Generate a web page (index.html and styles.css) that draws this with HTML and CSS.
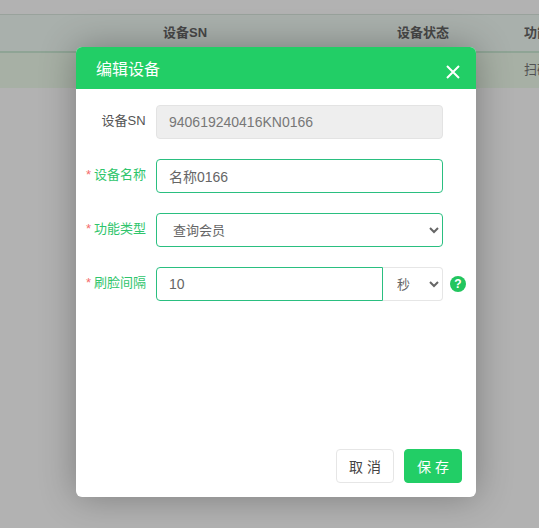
FILE: index.html
```html
<!doctype html>
<html lang="zh-CN">
<head>
  <meta charset="utf-8">
  <title>编辑设备</title>
  <link rel="stylesheet" href="styles.css">
</head>
<body>
  <div class="page">
    <div class="top_strip"></div>
    <div class="tableHead">
      <div class="col_sn">设备SN</div>
      <div class="col_status">设备状态</div>
      <div class="col_type">功能类型</div>
    </div>
    <div class="tableRow">
      <div class="col_sn"></div>
      <div class="col_status"></div>
      <div class="col_type">扫码验证</div>
    </div>
  </div>
  <div class="backdrop"></div>
  <div class="modal">
    <div class="modalHeader">
      <span class="modalTitle">编辑设备</span>
      <svg class="modalClose" width="14" height="14" viewBox="0 0 14 14">
        <path d="M1 1L13 13M13 1L1 13" stroke="#fff" stroke-width="2" fill="none"/>
      </svg>
    </div>
    <div class="modalBody">
      <div class="formRow">
        <label class="formLabel plain">设备SN</label>
        <input class="formInput disabled" value="940619240416KN0166" disabled>
      </div>
      <div class="formRow">
        <label class="formLabel"><i>*</i>设备名称</label>
        <input class="formInput" value="名称0166">
      </div>
      <div class="formRow">
        <label class="formLabel"><i>*</i>功能类型</label>
        <select class="formInput formSelect">
          <option>查询会员</option>
        </select>
      </div>
      <div class="formRow">
        <label class="formLabel"><i>*</i>刷脸间隔</label>
        <div class="inputGroup">
          <input class="formInput groupInput" value="10">
          <select class="formInput unitSelect">
            <option>秒</option>
          </select>
        </div>
        <span class="helpIcon">?</span>
      </div>
    </div>
    <div class="modalFooter">
      <button class="btn btnCancel">取 消</button>
      <button class="btn btnSave">保 存</button>
    </div>
  </div>
</body>
</html>
```

FILE: styles.css
```css
* {
  box-sizing: border-box;
}
html, body {
  margin: 0;
  height: 528px;
  overflow: hidden;
  background: #fff;
  font-family: "Liberation Sans", "Noto Sans CJK SC", sans-serif;
}
.page {
  width: 539px;
}
.top_strip {
  height: 15px;
  background: #fff;
  border-bottom: 1px solid #dce9e0;
}
.tableHead, .tableRow {
  display: flex;
  white-space: nowrap;
  overflow: hidden;
  font-size: 13px;
  color: #666;
}
.tableHead {
  height: 38px;
  padding-bottom: 4px;
  align-items: center;
  background: #f3fcf7;
  border-bottom: 2px solid #cdebd6;
  font-weight: bold;
}
.tableRow {
  height: 35px;
  padding-bottom: 4px;
  align-items: center;
  background: #f0fded;
  color: #777;
}
.col_sn {
  width: 163px;
  margin-left: 163px;
  flex: none;
}
.col_status {
  width: 127px;
  margin-left: 71px;
  flex: none;
}
.col_type {
  flex: none;
}
.backdrop {
  position: absolute;
  inset: 0;
  background: rgba(0, 0, 0, 0.3);
}
.modal {
  position: absolute;
  left: 76px;
  top: 47px;
  width: 400px;
  height: 450px;
  display: flex;
  flex-direction: column;
  background: #fff;
  border-radius: 6px;
  box-shadow: 0 0 36px rgba(0, 0, 0, 0.3);
  overflow: hidden;
}
.modalHeader {
  height: 42px;
  flex: none;
  display: flex;
  align-items: center;
  justify-content: space-between;
  padding: 0 16px 0 20px;
  background: #22ce66;
  color: #fff;
}
.modalTitle {
  font-size: 16px;
}
.modalClose {
  margin-top: 8px;
}
.modalBody {
  flex: 1;
  padding-top: 16px;
}
.formRow {
  display: flex;
  align-items: center;
  height: 34px;
  margin-bottom: 20px;
}
.formLabel {
  width: 80px;
  padding-bottom: 3px;
  font-size: 13px;
  line-height: 18px;
  text-align: center;
  color: #2fc56c;
  flex: none;
  white-space: nowrap;
}
.formLabel.plain {
  color: #555;
  padding-left: 15px;
}
.formLabel i {
  font-style: normal;
  color: #f56c6c;
  margin-right: 3px;
}
.formInput {
  width: 287px;
  height: 34px;
  padding: 0 12px;
  font-family: inherit;
  font-size: 14px;
  color: #666;
  background: #fff;
  border: 1px solid #2abf80;
  border-radius: 4px;
  outline: none;
}
.formInput.disabled {
  background: #eee;
  border-color: #e3e3e3;
  color: #777;
}
.formSelect {
  font-size: 13px;
}
.inputGroup {
  display: flex;
  width: 287px;
  flex: none;
}
.groupInput {
  flex: 1;
  min-width: 0;
  border-radius: 4px 0 0 4px;
}
.unitSelect {
  width: 60px;
  flex: none;
  padding: 0 10px;
  font-size: 13px;
  border: 1px solid #e6e6e6;
  border-left: none;
  border-radius: 0 4px 4px 0;
}
.helpIcon {
  width: 16px;
  height: 16px;
  margin-left: 7px;
  flex: none;
  border-radius: 50%;
  background: #22c55e;
  color: #fff;
  font-size: 12px;
  font-weight: bold;
  line-height: 16px;
  text-align: center;
}
.modalFooter {
  display: flex;
  justify-content: flex-end;
  gap: 10px;
  padding: 0 14px 14px 0;
}
.btn {
  height: 34px;
  border-radius: 4px;
  font-family: inherit;
  font-size: 14px;
  cursor: pointer;
}
.btnCancel {
  width: 58px;
  background: #fff;
  border: 1px solid #e6e6e6;
  color: #444;
}
.btnSave {
  width: 58px;
  background: #22ce66;
  border: 1px solid #22ce66;
  color: #fff;
}
```
